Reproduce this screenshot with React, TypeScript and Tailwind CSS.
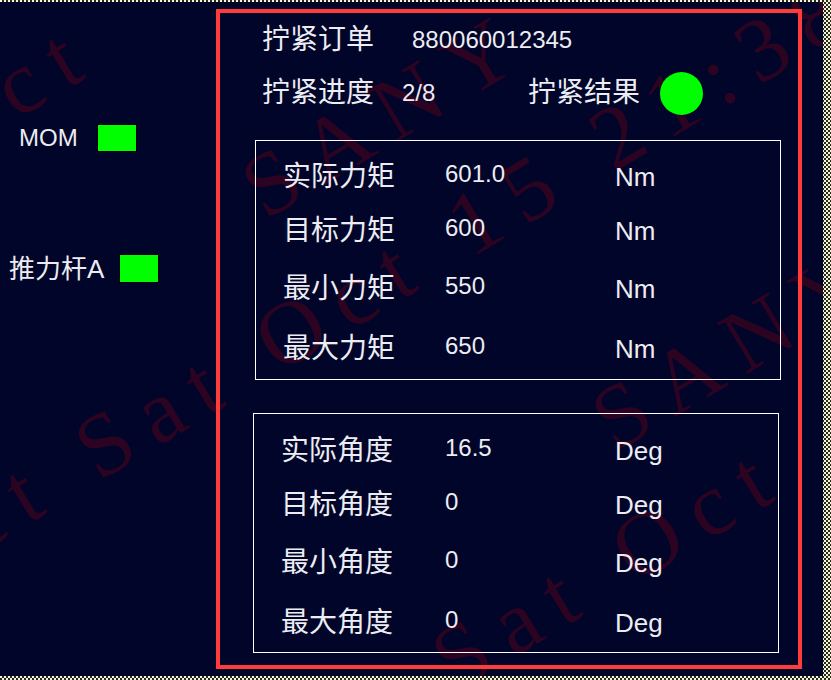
import React from "react";

const WM = "absolute whitespace-nowrap leading-none origin-left rotate-[-31deg] font-['Liberation_Serif',serif] text-[90px] tracking-[18px] text-[#2c0422]";

function Watermark() {
  return (
    <div className="absolute inset-0 pointer-events-none">
      <div className={WM} style={{ left: -109, top: 525 }}>Oct Sat Oct 15 21:38</div>
      <div className={WM} style={{ left: 250, top: 148 }}>SANY</div>
      <div className={WM} style={{ left: -70, top: 90 }}>Oct</div>
      <div className={WM} style={{ left: 600, top: 380 }}>SANY</div>
      <div className={WM} style={{ left: 440, top: 620 }}>Sat Oct</div>
    </div>
  );
}

function Row({
  mt,
  label,
  value,
  unit,
  labelW,
}: {
  mt: string;
  label: string;
  value: string;
  unit: string;
  labelW: string;
}) {
  return (
    <div className={`flex items-center h-[30px] pl-[27px] ${mt}`}>
      <span className={`${labelW} text-[28px] leading-none`}>{label}</span>
      <span className="w-[170px] text-[24px] leading-none pb-[6px]">{value}</span>
      <span className="text-[26px] leading-none">{unit}</span>
    </div>
  );
}

export default function App() {
  return (
    <div className="relative w-[831px] h-[680px] overflow-hidden bg-[repeating-conic-gradient(#2a2a10_0_25%,#f4f4e6_0_50%)] bg-[length:4px_4px]">
      <div className="relative mt-[2px] w-[823px] h-[674px] bg-[#000529] overflow-hidden flex font-['Liberation_Sans','Noto_Sans_CJK_SC',sans-serif] text-[#ececf2]">
        <Watermark />
        <div className="relative z-10 w-[216px] flex flex-col">
          <div className="mt-[122px] h-[28px] flex items-center pl-[19px]">
            <span className="w-[78px] text-[24px] leading-none">MOM</span>
            <span className="w-[40px] h-[28px] bg-[#00ff00] border border-black" />
          </div>
          <div className="mt-[102px] h-[29px] flex items-center pl-[9px]">
            <span className="w-[110px] text-[26px] leading-none">推力杆A</span>
            <span className="w-[40px] h-[29px] bg-[#00ff00] border border-black" />
          </div>
        </div>
        <div className="relative z-10 mt-[7px] w-[586px] h-[660px] border-4 border-[#ff3b3b] flex flex-col">
          <div className="h-[54px] flex items-center pl-[42px]">
            <span className="w-[150px] text-[28px] leading-none">拧紧订单</span>
            <span className="text-[24px] leading-none">880060012345</span>
          </div>
          <div className="h-[52px] flex items-center pl-[42px]">
            <span className="w-[140px] text-[28px] leading-none">拧紧进度</span>
            <span className="w-[126px] text-[24px] leading-none">2/8</span>
            <span className="w-[132px] text-[28px] leading-none">拧紧结果</span>
            <span className="w-[43px] h-[43px] rounded-full bg-[#00ff00]" />
          </div>
          <div className="ml-[35px] mt-[21px] w-[526px] h-[240px] border border-white flex flex-col">
            <Row mt="mt-[21px]" labelW="w-[162px]" label="实际力矩" value="601.0" unit="Nm" />
            <Row mt="mt-[24px]" labelW="w-[162px]" label="目标力矩" value="600" unit="Nm" />
            <Row mt="mt-[28px]" labelW="w-[162px]" label="最小力矩" value="550" unit="Nm" />
            <Row mt="mt-[30px]" labelW="w-[162px]" label="最大力矩" value="650" unit="Nm" />
          </div>
          <div className="ml-[33px] mt-[33px] w-[526px] h-[240px] border border-white flex flex-col">
            <Row mt="mt-[22px]" labelW="w-[164px]" label="实际角度" value="16.5" unit="Deg" />
            <Row mt="mt-[24px]" labelW="w-[164px]" label="目标角度" value="0" unit="Deg" />
            <Row mt="mt-[28px]" labelW="w-[164px]" label="最小角度" value="0" unit="Deg" />
            <Row mt="mt-[30px]" labelW="w-[164px]" label="最大角度" value="0" unit="Deg" />
          </div>
        </div>
      </div>
    </div>
  );
}
